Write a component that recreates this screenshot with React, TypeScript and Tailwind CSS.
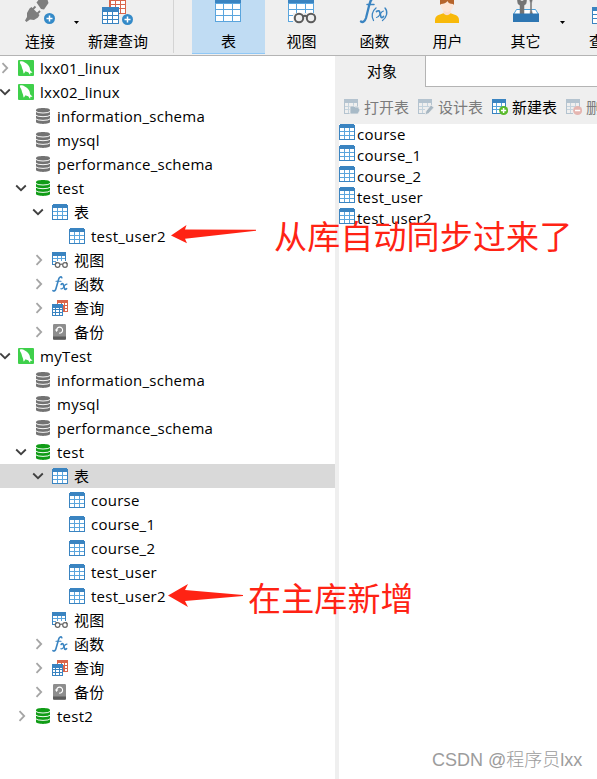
import type { ReactNode } from "react";

const BLUE = "#3a84c1";
const LIGHT = "#5aa5dd";

function TableIcon() {
  return (
    <svg className="block size-4 shrink-0" viewBox="0 0 16 16" shapeRendering="crispEdges">
      <rect x="0" y="1" width="16" height="15" fill={BLUE} />
      <rect x="1" y="0" width="14" height="2" fill={BLUE} />
      <rect x="1" y="4" width="14" height="11" fill="#fff" />
      <path d="M5 4h1v11h-1zM10 4h1v11h-1zM1 7h14v1H1zM1 11h14v1H1z" fill={LIGHT} />
    </svg>
  );
}

function ViewIcon() {
  return (
    <svg className="block size-4 shrink-0" viewBox="0 0 16 16">
      <g shapeRendering="crispEdges">
        <rect x="0" y="0" width="14" height="4" fill={BLUE} />
        <path d="M0 4h1v9H0zM13 4h1v5h-1zM0 12h3v1H0z" fill={BLUE} />
        <path d="M5 4h1v5H5zM9 4h1v5H9zM1 6h12v1H1zM1 9h3v1H1z" fill={LIGHT} />
      </g>
      <g fill="#fff" stroke="#666" strokeWidth="1.2">
        <circle cx="5.6" cy="13" r="2.3" />
        <circle cx="13" cy="13" r="2.3" />
        <path d="M7.9 12.6q1.4-1 2.8 0M3.4 12.2l1-2.2M15.2 12.2l-1-2.2" fill="none" />
      </g>
    </svg>
  );
}

function FxIcon() {
  return (
    <svg className="block size-4 shrink-0 overflow-visible" viewBox="0 0 16 16" fill="none" stroke={BLUE} strokeLinecap="round">
      <path d="M9.8 1.7C9.3.5 7.6.6 6.8 2.8L4 12.5C3.4 14.8 2 15.5.9 14.7" strokeWidth="1.6" />
      <path d="M4 5.2h5" strokeWidth="1.1" />
      <path d="M9.2 8.3c1-1 2-.7 2.3.5l.9 3.6c.3 1.2 1.1 1.3 2.2.3" strokeWidth="1.7" />
      <path d="M15 8.1c-1.6-.3-2.4 1.5-3.3 2.8-.8 1.4-1.6 2.4-2.9 1.9" strokeWidth="1.1" />
    </svg>
  );
}

function QueryIcon() {
  return (
    <svg className="block size-4 shrink-0" viewBox="0 0 16 16" shapeRendering="crispEdges">
      <rect x="5" y="0" width="11" height="12" fill="#d9654b" />
      <path d="M6 3h3v2H6zM10 3h2v2h-2zM13 3h2v2h-2zM13 6h2v2h-2zM13 9h2v2h-2z" fill="#fff" />
      <rect x="0" y="4" width="11" height="12" fill={BLUE} />
      <path d="M1 8h2v1H1zM4 8h3v1H4zM8 8h2v1H8zM1 10h2v2H1zM4 10h3v2H4zM8 10h2v2H8zM1 13h2v2H1zM4 13h3v2H4zM8 13h2v2H8z" fill="#fff" />
    </svg>
  );
}

function BackupIcon() {
  return (
    <svg className="block size-4 shrink-0" viewBox="0 0 16 16">
      <rect x="1" y="0" width="13" height="15.6" rx="1.2" fill="#8d8d8d" />
      <path d="M1 12.5h13v2q0 1.2-1.2 1.2H2.2Q1 15.7 1 14.5z" fill="#5c5c5c" />
      <path d="M4.6 6.2a3 3 0 1 1 2.6 2.9" fill="none" stroke="#fff" strokeWidth="1.1" />
      <path d="M2.9 5.6h3.4L4.6 8z" fill="#fff" />
    </svg>
  );
}

function DatabaseIcon({ on }: { on?: boolean }) {
  return (
    <svg className="block size-4 shrink-0" viewBox="0 0 16 16">
      <path d="M1 2.200C1 .9 4 .1 8 .1s7 .8 7 2.100v11.600c0 1.300-3 2.100-7 2.100s-7-.8-7-2.100z" fill={on ? "#109c16" : "#737373"} />
      <path d="M.5 3.200Q2 5 8 5t7.500-1.800M.5 6.900Q2 8.700 8 8.700t7.500-1.800M.5 10.600Q2 12.400 8 12.400t7.500-1.800" fill="none" stroke="#fff" strokeWidth=".95" />
    </svg>
  );
}

function ServerIcon() {
  return (
    <svg className="block size-4 shrink-0" viewBox="0 0 16 16">
      <rect width="16" height="16" rx="1" fill="#3fd04b" />
      <path d="M1.800 1.800C3.400.9 5 1.500 6.800 2.500c2.300 1.300 4.300 3 4.900 5.200.3 1.300.2 2.200.8 3.100.6.800 1.700 1.200 2 1.800-.7.400-1.600.1-2.200.4-.2.500.1 1.200-.2 1.700-.8-.6-1.200-1.800-2-2.500-.9-.7-2-.8-3-.8-.4.800-.7 1.900-1.400 2.200-.5-.9-.4-2.200-.8-3.300C4.200 9 4 7.400 3.500 6c-.4-1.300-1.300-2-1.400-2.900z" fill="#fff" />
    </svg>
  );
}

function Chevron({ open }: { open?: boolean }) {
  return (
    <svg className="block size-3 shrink-0 overflow-visible" viewBox="0 0 12 12" fill="none" strokeWidth="1.800">
      {open ? <path d="M1.200 3.500L6 8.200l4.800-4.700" stroke="#404040" /> : <path d="M3.500 1.200L8.200 6l-4.700 4.800" stroke="#a5a5a5" />}
    </svg>
  );
}

type Kind = "server" | "db" | "dbOn" | "table" | "view" | "fx" | "query" | "backup";
type Node = { level: 0 | 1 | 2 | 3; kind: Kind; label: string; state?: "open" | "closed"; selected?: boolean };

const icons: Record<Kind, ReactNode> = {
  server: <ServerIcon />,
  db: <DatabaseIcon />,
  dbOn: <DatabaseIcon on />,
  table: <TableIcon />,
  view: <ViewIcon />,
  fx: <FxIcon />,
  query: <QueryIcon />,
  backup: <BackupIcon />,
};

const nodes: Node[] = [
  { level: 0, kind: "server", label: "lxx01_linux", state: "closed" },
  { level: 0, kind: "server", label: "lxx02_linux", state: "open" },
  { level: 1, kind: "db", label: "information_schema" },
  { level: 1, kind: "db", label: "mysql" },
  { level: 1, kind: "db", label: "performance_schema" },
  { level: 1, kind: "dbOn", label: "test", state: "open" },
  { level: 2, kind: "table", label: "表", state: "open" },
  { level: 3, kind: "table", label: "test_user2" },
  { level: 2, kind: "view", label: "视图", state: "closed" },
  { level: 2, kind: "fx", label: "函数", state: "closed" },
  { level: 2, kind: "query", label: "查询", state: "closed" },
  { level: 2, kind: "backup", label: "备份", state: "closed" },
  { level: 0, kind: "server", label: "myTest", state: "open" },
  { level: 1, kind: "db", label: "information_schema" },
  { level: 1, kind: "db", label: "mysql" },
  { level: 1, kind: "db", label: "performance_schema" },
  { level: 1, kind: "dbOn", label: "test", state: "open" },
  { level: 2, kind: "table", label: "表", state: "open", selected: true },
  { level: 3, kind: "table", label: "course" },
  { level: 3, kind: "table", label: "course_1" },
  { level: 3, kind: "table", label: "course_2" },
  { level: 3, kind: "table", label: "test_user" },
  { level: 3, kind: "table", label: "test_user2" },
  { level: 2, kind: "view", label: "视图" },
  { level: 2, kind: "fx", label: "函数", state: "closed" },
  { level: 2, kind: "query", label: "查询", state: "closed" },
  { level: 2, kind: "backup", label: "备份", state: "closed" },
  { level: 1, kind: "dbOn", label: "test2", state: "closed" },
];

const chevronSlot = ["-ml-px mr-[7px]", "ml-[15px] mr-2", "ml-8 mr-2", "ml-[49px] mr-2"];

function TreeRow({ node }: { node: Node }) {
  const nudge = node.level > 0 && node.state === "closed" ? "pl-px" : "";
  return (
    <div className={`flex h-6 items-center ${node.selected ? "bg-[#d9d9d9]" : ""}`}>
      <div className={`w-3 shrink-0 ${nudge} ${chevronSlot[node.level]}`}>{node.state && <Chevron open={node.state === "open"} />}</div>
      {icons[node.kind]}
      <span className="whitespace-nowrap pl-1.5 tracking-[0.25px]">{node.label}</span>
    </div>
  );
}

function PlusBadge() {
  return (
    <g>
      <circle cx="49.500" cy="18.500" r="5.500" fill="#348ac8" />
      <path d="M46.500 18.500h6M49.500 15.500v6" stroke="#fff" strokeWidth="1.500" />
    </g>
  );
}

function Tool({ width, label, children, active }: { width: string; label: string; children: ReactNode; active?: boolean }) {
  return (
    <div className={`flex h-[54px] shrink-0 flex-col items-center ${width} ${active ? "border-b border-[#90c8f6] bg-[#c0dcf3]" : ""}`}>
      <div className="flex h-[30px] w-full justify-center">{children}</div>
      <span className="whitespace-nowrap leading-[22px]">{label}</span>
    </div>
  );
}

function Caret() {
  return (
    <svg className="mt-[21px] h-[3px] w-[5px] shrink-0" viewBox="0 0 5 3">
      <path d="M0 0h5L2.500 3z" fill="#000" />
    </svg>
  );
}

function Toolbar() {
  return (
    <header className="flex h-14 shrink-0 overflow-hidden border-b border-[#b4b4b4] bg-[#efefef]">
      <Tool width="w-[74px] pl-[6px]" label="连接">
        <svg className="h-[30px] w-[68px]" viewBox="6 0 68 30">
          <g fill="#7e7e7e">
            <path d="M36.500 2.500L40-2h7l1.500 5-4.500 6.500-3-.5z" />
            <path d="M29.500 8.500l2-1.500 8 8-1.500 2.500-4 2.500-4-.5-3.500 2.500-1.500-1.500 2-3.500v-4z" />
            <path d="M32.500 9.500l3-3M37 14l3-3" stroke="#7e7e7e" strokeWidth="1.800" />
          </g>
          <PlusBadge />
        </svg>
      </Tool>
      <Caret />
      <Tool width="w-[77px] pl-[1px]" label="新建查询">
        <svg className="h-[30px] w-[76px]" viewBox="80 0 76 30">
          <g shapeRendering="crispEdges">
            <path d="M109-5h17v19h-17z" fill="#d9654b" />
            <path d="M111 1h4v3h-4zM116 1h4v3h-4zM121 1h4v3h-4zM111 5h4v3h-4zM116 5h4v3h-4zM121 5h4v3h-4zM116 9h4v4h-4zM121 9h4v4h-4z" fill="#fff" />
            <path d="M102 7h17v17h-17z" fill={BLUE} />
            <path d="M103 12h4v3h-4zM108 12h4v3h-4zM113 12h5v3h-5zM103 16h4v3h-4zM108 16h4v3h-4zM113 16h5v3h-5zM103 20h4v3h-4zM108 20h4v3h-4zM113 20h5v3h-5z" fill="#fff" />
          </g>
          <g transform="translate(78 1)"><PlusBadge /></g>
        </svg>
      </Tool>
      <div className="ml-[17px] mr-[18px] h-[53px] w-px shrink-0 bg-[#d4d4d4]" />
      <Tool width="w-[73px]" label="表" active>
        <svg className="h-[30px] w-[73px]" viewBox="192 0 73 30" shapeRendering="crispEdges">
          <path d="M215 0h26v22h-26z" fill="#5aa5dd" />
          <path d="M215 0h26v3h-26z" fill={BLUE} />
          <path d="M216 4h7v5h-7zM224 4h8v5h-8zM233 4h7v5h-7zM216 10h7v5h-7zM224 10h8v5h-8zM233 10h7v5h-7zM216 16h7v5h-7zM224 16h8v5h-8zM233 16h7v5h-7z" fill="#fff" />
        </svg>
      </Tool>
      <Tool width="w-[73px]" label="视图">
        <svg className="h-[30px] w-[73px]" viewBox="265 0 73 30">
          <g shapeRendering="crispEdges">
            <path d="M288 0h26v22h-26z" fill="#5aa5dd" />
            <path d="M288 0h26v3h-26z" fill={BLUE} />
            <path d="M289 4h7v5h-7zM297 4h8v5h-8zM306 4h7v5h-7zM289 10h7v5h-7zM297 10h8v5h-8zM306 10h7v5h-7zM289 16h7v5h-7z" fill="#fff" />
            <path d="M293 13h22v10h-22z" fill="#efefef" />
          </g>
          <g fill="#efefef" stroke="#5b5b5b" strokeWidth="2">
            <circle cx="299" cy="18" r="4.200" />
            <circle cx="311" cy="18" r="4.200" />
            <path d="M303 16.500q2-1.500 4 0" fill="none" />
          </g>
        </svg>
      </Tool>
      <Tool width="w-[73px]" label="函数">
        <svg className="h-[30px] w-[73px]" viewBox="338 0 73 30" fill="none" stroke={BLUE} strokeLinecap="round">
          <path d="M374-2c-3 0-4 4-5 8l-3 12c-1 3-3 5-5 3.500" strokeWidth="2.300" />
          <path d="M367 4.500h7" strokeWidth="1.500" />
          <path d="M376 8c-4 3-5 8.500-2.500 12.500M385 8c3.500 4 1.500 9.500-2.500 12.500" strokeWidth="1.300" />
          <path d="M376.500 11.500c2-1.500 3-.5 3.300.8l1 4c.3 1.800 1.700 1.500 2.700.2" strokeWidth="1.700" />
          <path d="M383.500 11c-3 0-3.500 6.500-7 6.500" strokeWidth="1.200" />
        </svg>
      </Tool>
      <Tool width="w-[73px]" label="用户">
        <svg className="h-[30px] w-[73px]" viewBox="411 0 73 30">
          <path d="M435 23v-3q0-4.500 5-5.500l4-1.500h6l4 1.500q5 1 5 5.500v3z" fill="#f8b90a" />
          <path d="M443.500 8h7v5.500q-3.500 3.500-7 0z" fill="#fbdcca" />
          <path d="M440.500-2h13v6c0 4-3 8-6.500 8s-6.500-4-6.500-8z" fill="#fde5d6" />
          <path d="M440-2h14v7l-1-1c-3 0-5-1-5.500-3-1 2-4 3-6.500 3l-1 1z" fill="#b6642b" />
        </svg>
      </Tool>
      <Tool width="w-[76px] pl-[7px]" label="其它">
        <svg className="h-[30px] w-[69px]" viewBox="491 0 69 30">
          <path d="M516.500 9.500h19l3 5h-25z" fill="#fff" stroke="#4ba0da" />
          <path d="M520 14V5.500Q517 4 517.500 0V-2h3v3h3v-3h3v2q.5 4-2.500 5.500V14zM530 14l.5-4V3l-1-4h3l-1 4v7l1 4z" fill="#747474" stroke="#747474" strokeWidth=".5" />
          <path d="M513 13.500h26V22h-26z" fill="#2e76b2" />
        </svg>
      </Tool>
      <Caret />
      <div className="ml-[24px] w-8 shrink-0">
        <svg className="h-[30px] w-8" viewBox="589 0 32 30" shapeRendering="crispEdges">
          <path d="M592 7h17v17h-17z" fill={BLUE} />
          <path d="M593 11h7v3h-7zM593 15h7v3h-7zM593 19h7v4h-7z" fill="#fff" />
        </svg>
        <span className="block whitespace-nowrap leading-[22px]">查询</span>
      </div>
    </header>
  );
}

type ActionKind = "open" | "design" | "new" | "delete";

function ActionIcon({ kind }: { kind: ActionKind }) {
  const muted = kind !== "new";
  return (
    <svg className="block size-4 shrink-0" viewBox="0 0 16 16">
      <g shapeRendering="crispEdges">
        <path d="M0 0h14v15H0z" fill={muted ? "#b4c3cf" : BLUE} />
        <path d="M1 4h12v10H1z" fill={muted ? "#efefef" : "#fff"} />
        <path d="M4 4h1v10H4zM9 4h1v10H9zM1 7h12v1H1zM1 10h12v1H1z" fill={muted ? "#c4d3dd" : LIGHT} />
        {muted && <path d="M7 8h8v8H7z" fill="#efefef" />}
      </g>
      {kind === "open" && <path d="M6 15V7h4l1 1h4v2h1v1l-2 4z" fill="#a8bac7" stroke="#efefef" strokeWidth=".8" />}
      {kind === "design" && <path d="M7 16l1-4 5-6 3 2.500-5.500 6z" fill="#a8b7c2" stroke="#efefef" strokeWidth=".8" />}
      {(kind === "new" || kind === "delete") && (
        <g>
          <circle cx="11.600" cy="11.500" r="4.500" fill={kind === "new" ? "#5aba2c" : "#e5b5b0"} />
          <path d={kind === "new" ? "M9 11.500h5.200M11.600 8.900v5.200" : "M9 11.500h5.200"} stroke="#fff" strokeWidth="1.500" />
        </g>
      )}
    </svg>
  );
}

const actions: { kind: ActionKind; label: string }[] = [
  { kind: "open", label: "打开表" },
  { kind: "design", label: "设计表" },
  { kind: "new", label: "新建表" },
  { kind: "delete", label: "删除表" },
];

function ObjectsPane() {
  return (
    <main className="flex min-w-0 flex-1 flex-col overflow-hidden">
      <div className="flex h-[31px] shrink-0 bg-[#efefef]">
        <div className="w-[90px] shrink-0 pl-8 leading-[31px]">对象</div>
        <div className="flex-1 border-b border-l border-[#b4b4b4] bg-white" />
      </div>
      <div className="flex h-[37px] shrink-0 items-center gap-[10px] bg-[#efefef] pl-[9px] pt-[3px]">
        {actions.map((a) => (
          <div key={a.kind} className={`flex shrink-0 items-center gap-1 whitespace-nowrap ${a.kind === "new" ? "text-black" : "text-[#7b7b7b]"}`}>
            <ActionIcon kind={a.kind} />
            <span className="w-11">{a.label}</span>
          </div>
        ))}
      </div>
      <div className="flex-1 border-l-4 border-[#efefef]">
        {["course", "course_1", "course_2", "test_user", "test_user2"].map((name) => (
          <div key={name} className="flex h-[21px]">
            <TableIcon />
            <span className="pl-0.5 leading-[21px] tracking-[0.25px]">{name}</span>
          </div>
        ))}
      </div>
    </main>
  );
}

export default function App() {
  return (
    <div className="relative flex h-[779px] w-[597px] flex-col overflow-hidden bg-white font-['Open_Sans','Noto_Sans_CJK_SC',sans-serif] text-[15px] text-black">
      <Toolbar />
      <div className="flex min-h-0 flex-1">
        <nav className="w-[335px] shrink-0 overflow-hidden">
          {nodes.map((n, i) => (
            <TreeRow key={i} node={n} />
          ))}
        </nav>
        <ObjectsPane />
      </div>
      <svg className="absolute left-[171px] top-[224px] h-5 w-[86px]" viewBox="171 224 86 20" fill="#ff2314">
        <path d="M171 235.500l15.500-10.500-1.500 4.500 71 .3v1l-71 8 2 4.500z" />
      </svg>
      <svg className="absolute left-[167px] top-[583px] h-6 w-[77px]" viewBox="167 583 77 24" fill="#ff2314">
        <path d="M168 595.500l20-11.500-3 6 58 5v1l-58 5 3 6z" />
      </svg>
      <div className="absolute left-[274px] top-[217px] whitespace-nowrap text-[33px] leading-10 tracking-[0.15px] text-[#ff2314]">从库自动同步过来了</div>
      <div className="absolute left-[248px] top-[579px] whitespace-nowrap text-[33px] leading-10 tracking-[0.15px] text-[#ff2314]">在主库新增</div>
      <div className="absolute left-[432px] top-[748px] whitespace-nowrap font-['Liberation_Sans','Noto_Sans_CJK_SC',sans-serif] text-[18px] font-light leading-6 text-[#9c9c9c]">CSDN @程序员lxx</div>
    </div>
  );
}
